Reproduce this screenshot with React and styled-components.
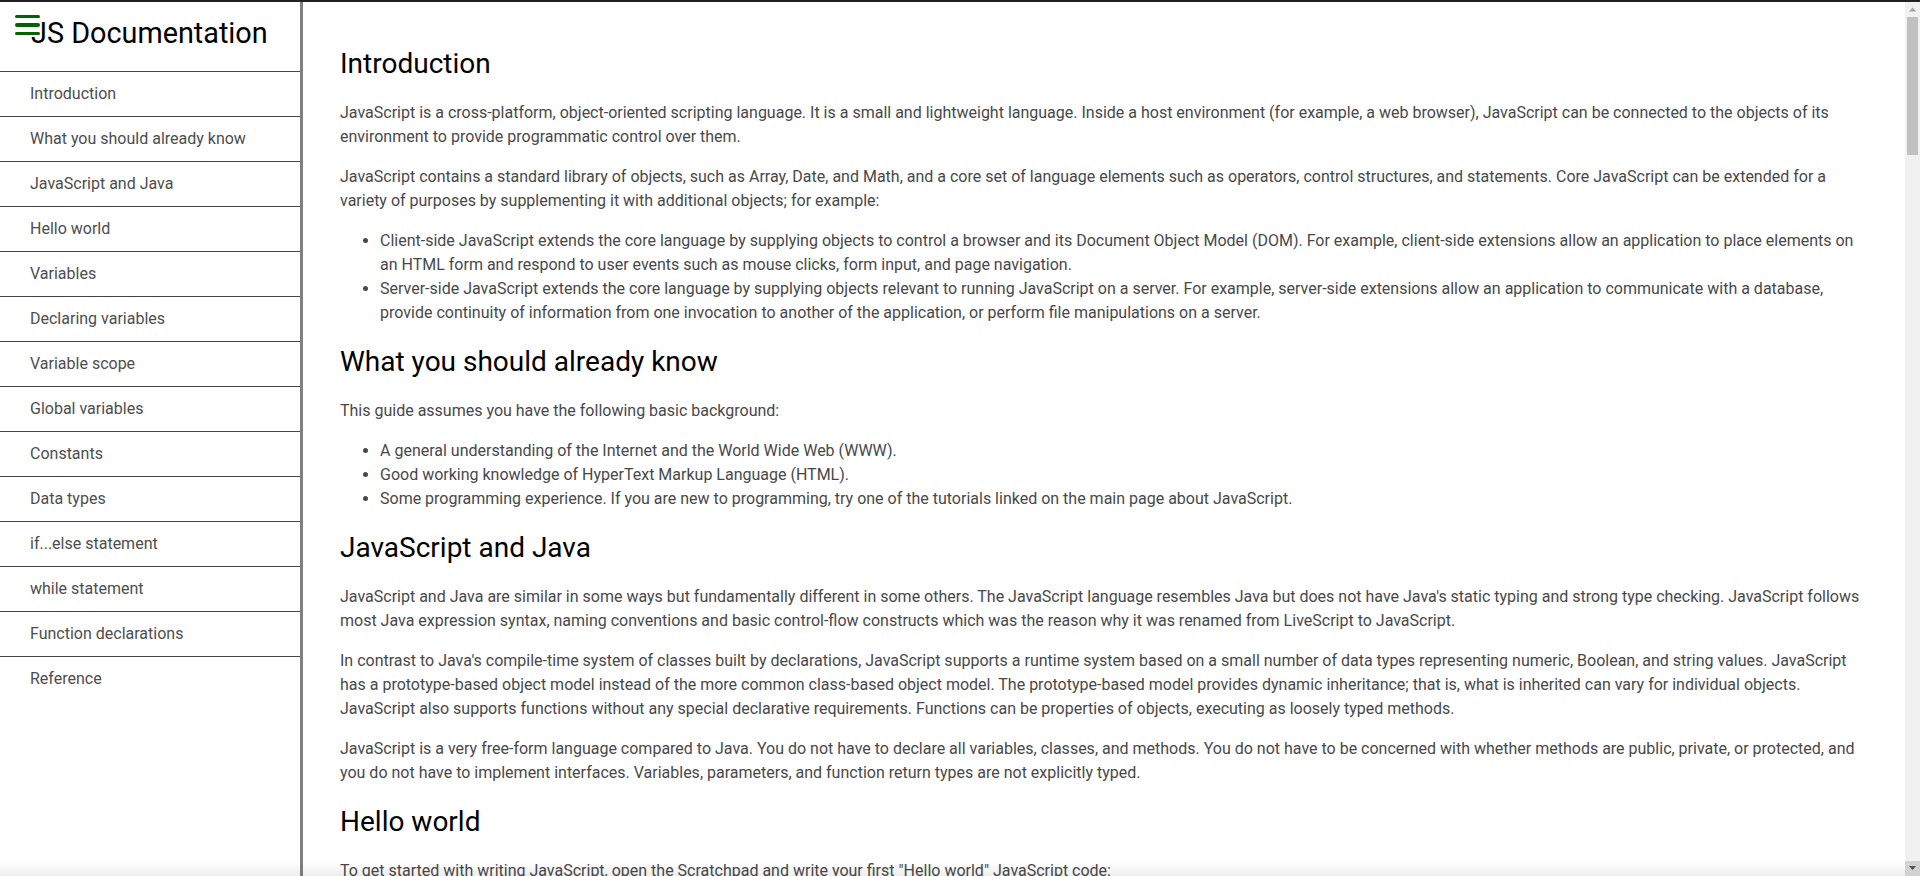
import React, { useLayoutEffect, useRef, useState } from "react";
import styled, { createGlobalStyle } from "styled-components";

const GlobalStyle = createGlobalStyle`
  html, body {
    margin: 0;
    padding: 0;
    height: 100%;
    overflow: hidden;
    background: #ffffff;
    font-family: Roboto, "Noto Sans", "Liberation Sans", sans-serif;
  }
  * { box-sizing: border-box; }
`;

const Page = styled.div`
  height: 100vh;
  display: flex;
  flex-direction: column;
  border-top: 2px solid #202124;
`;

const Body = styled.div`
  flex: 1;
  min-height: 0;
  display: flex;
  position: relative;
`;

const Sidebar = styled.nav`
  position: relative;
  flex: 0 0 303px;
  border-right: 3px solid #808080;
  background: #fff;
`;

const NavHeader = styled.header`
  height: 69px;
  padding: 14px 0 0 31px;
  font-size: 28.8px;
  font-weight: 400;
  color: #000;
  line-height: normal;
`;

const MenuButton = styled.button`
  position: absolute;
  top: 13px;
  left: 15px;
  width: 25px;
  height: 20px;
  padding: 0;
  border: 0;
  background: transparent;
  display: flex;
  flex-direction: column;
  justify-content: space-between;
  cursor: pointer;
`;

const MenuBar = styled.span`
  display: block;
  height: 3.3px;
  width: 25px;
  border-radius: 2px;
  background: #006400;
`;

const NavList = styled.ul`
  list-style: none;
  margin: 0;
  padding: 0;
`;

const NavItem = styled.li`
  border-top: 1px solid #444;
`;

const NavLink = styled.a`
  display: flex;
  align-items: center;
  height: 44px;
  padding-left: 30px;
  padding-bottom: 1px;
  font-size: 16px;
  color: #4d4d4d;
  text-decoration: none;
`;

const Content = styled.div`
  flex: 1;
  min-width: 0;
  display: flex;
`;

const Main = styled.main`
  flex: 1;
  min-width: 0;
  overflow-y: scroll;
  scrollbar-width: none;
  padding: 25px 37px 0 37px;
  font-size: 16px;
  line-height: 1.5;
  color: #484848;
  &::-webkit-scrollbar {
    display: none;
  }
`;

const ScrollRail = styled.div`
  flex: 0 0 15px;
  display: flex;
  flex-direction: column;
  background: #f1f1f1;
`;

const RailButton = styled.div`
  flex: 0 0 15px;
  display: flex;
  align-items: center;
  justify-content: center;
  background: ${(p) => (p.$active ? "#d2d2d2" : "#f1f1f1")};
`;

const RailTrack = styled.div`
  flex: 1;
  padding: 0 2px;
`;

const RailThumb = styled.div`
  height: 136px;
  background: #c1c1c1;
`;

const Section = styled.section``;

const SectionTitle = styled.h2`
  font-size: 28px;
  font-weight: 400;
  line-height: 1.5;
  color: #000;
  margin: 16px 0;
`;

const Para = styled.p`
  margin: 16px 0;
`;

const List = styled.ul`
  margin: 16px 0;
  padding-left: 40px;
`;

const Code = styled.pre`
  margin: 12px 0;
  padding: 6px 12px;
  background: #f2f2f2;
  border-radius: 4px;
  font-family: "Liberation Mono", "DejaVu Sans Mono", monospace;
  font-size: 13px;
  line-height: 1.3;
  color: #333;
  white-space: pre-wrap;
`;

const BottomShade = styled.div`
  position: absolute;
  left: 0;
  right: 15px;
  bottom: 0;
  height: 14px;
  pointer-events: none;
  background: linear-gradient(to bottom, rgba(0, 0, 0, 0), rgba(0, 0, 0, 0.07));
`;

const sections = [
  {
    title: "Introduction",
    blocks: [
      { p: "JavaScript is a cross-platform, object-oriented scripting language. It is a small and lightweight language. Inside a host environment (for example, a web browser), JavaScript can be connected to the objects of its environment to provide programmatic control over them." },
      { p: "JavaScript contains a standard library of objects, such as Array, Date, and Math, and a core set of language elements such as operators, control structures, and statements. Core JavaScript can be extended for a variety of purposes by supplementing it with additional objects; for example:" },
      {
        ul: [
          "Client-side JavaScript extends the core language by supplying objects to control a browser and its Document Object Model (DOM). For example, client-side extensions allow an application to place elements on an HTML form and respond to user events such as mouse clicks, form input, and page navigation.",
          "Server-side JavaScript extends the core language by supplying objects relevant to running JavaScript on a server. For example, server-side extensions allow an application to communicate with a database, provide continuity of information from one invocation to another of the application, or perform file manipulations on a server.",
        ],
      },
    ],
  },
  {
    title: "What you should already know",
    blocks: [
      { p: "This guide assumes you have the following basic background:" },
      {
        ul: [
          "A general understanding of the Internet and the World Wide Web (WWW).",
          "Good working knowledge of HyperText Markup Language (HTML).",
          "Some programming experience. If you are new to programming, try one of the tutorials linked on the main page about JavaScript.",
        ],
      },
    ],
  },
  {
    title: "JavaScript and Java",
    blocks: [
      { p: "JavaScript and Java are similar in some ways but fundamentally different in some others. The JavaScript language resembles Java but does not have Java's static typing and strong type checking. JavaScript follows most Java expression syntax, naming conventions and basic control-flow constructs which was the reason why it was renamed from LiveScript to JavaScript." },
      { p: "In contrast to Java's compile-time system of classes built by declarations, JavaScript supports a runtime system based on a small number of data types representing numeric, Boolean, and string values. JavaScript has a prototype-based object model instead of the more common class-based object model. The prototype-based model provides dynamic inheritance; that is, what is inherited can vary for individual objects. JavaScript also supports functions without any special declarative requirements. Functions can be properties of objects, executing as loosely typed methods." },
      { p: "JavaScript is a very free-form language compared to Java. You do not have to declare all variables, classes, and methods. You do not have to be concerned with whether methods are public, private, or protected, and you do not have to implement interfaces. Variables, parameters, and function return types are not explicitly typed." },
    ],
  },
  {
    title: "Hello world",
    blocks: [
      { p: 'To get started with writing JavaScript, open the Scratchpad and write your first "Hello world" JavaScript code:' },
      { code: 'function greetMe(yourName) { alert("Hello " + yourName); }\ngreetMe("World");' },
      { p: "Select the code in the pad and hit Ctrl+R to watch it unfold in your browser!" },
    ],
  },
  {
    title: "Variables",
    blocks: [
      { p: "You use variables as symbolic names for values in your application. The names of variables, called identifiers, conform to certain rules." },
      { p: 'A JavaScript identifier must start with a letter, underscore (_), or dollar sign ($); subsequent characters can also be digits (0-9). Because JavaScript is case sensitive, letters include the characters "A" through "Z" (uppercase) and the characters "a" through "z" (lowercase).' },
      { p: "You can use ISO 8859-1 or Unicode letters such as å and ü in identifiers. You can also use the Unicode escape sequences as characters in identifiers. Some examples of legal names are Number_hits, temp99, and _name." },
    ],
  },
  {
    title: "Declaring variables",
    blocks: [
      { p: "You can declare a variable in three ways:" },
      { p: "With the keyword var. For example," },
      { code: "var x = 42." },
      { p: "This syntax can be used to declare both local and global variables." },
      { p: "By simply assigning it a value. For example," },
      { code: "x = 42." },
      { p: "This always declares a global variable. It generates a strict JavaScript warning. You shouldn't use this variant." },
      { p: "With the keyword let. For example," },
      { code: "let y = 13." },
      { p: "This syntax can be used to declare a block scope local variable. See Variable scope below." },
    ],
  },
  {
    title: "Variable scope",
    blocks: [
      { p: "When you declare a variable outside of any function, it is called a global variable, because it is available to any other code in the current document. When you declare a variable within a function, it is called a local variable, because it is available only within that function." },
      { p: "JavaScript before ECMAScript 2015 does not have block statement scope; rather, a variable declared within a block is local to the function (or global scope) that the block resides within. For example the following code will log 5, because the scope of x is the function (or global context) within which x is declared, not the block, which in this case is an if statement." },
      { code: "if (true) {\n  var x = 5;\n}\nconsole.log(x); // 5" },
      { p: "This behavior changes, when using the let declaration introduced in ECMAScript 2015." },
      { code: "if (true) {\n  let y = 5;\n}\nconsole.log(y); // ReferenceError: y is not defined" },
    ],
  },
  {
    title: "Global variables",
    blocks: [
      { p: "Global variables are in fact properties of the global object. In web pages the global object is window, so you can set and access global variables using the window.variable syntax." },
      { p: "Consequently, you can access global variables declared in one window or frame from another window or frame by specifying the window or frame name. For example, if a variable called phoneNumber is declared in a document, you can refer to this variable from an iframe as parent.phoneNumber." },
    ],
  },
  {
    title: "Constants",
    blocks: [
      { p: "You can create a read-only, named constant with the const keyword. The syntax of a constant identifier is the same as for a variable identifier: it must start with a letter, underscore or dollar sign and can contain alphabetic, numeric, or underscore characters." },
      { code: "const PI = 3.14;" },
      { p: "A constant cannot change value through assignment or be re-declared while the script is running. It has to be initialized to a value." },
      { p: "The scope rules for constants are the same as those for let block scope variables. If the const keyword is omitted, the identifier is assumed to represent a variable." },
      { p: "You cannot declare a constant with the same name as a function or variable in the same scope. For example:" },
      { code: "// THIS WILL CAUSE AN ERROR\nfunction f() {};\nconst f = 5;\n\n// THIS WILL CAUSE AN ERROR ALSO\nfunction f() {\n  const g = 5;\n  var g;\n\n  //statements\n}" },
      { p: "However, object attributes are not protected, so the following statement is executed without problems." },
      { code: 'const MY_OBJECT = {"key": "value"};\nMY_OBJECT.key = "otherValue";' },
    ],
  },
  {
    title: "Data types",
    blocks: [
      { p: "The latest ECMAScript standard defines seven data types:" },
      {
        ul: [
          "Six data types that are primitives:",
          "Boolean. true and false.",
          "null. A special keyword denoting a null value. Because JavaScript is case-sensitive, null is not the same as Null, NULL, or any other variant.",
          "undefined. A top-level property whose value is undefined.",
          "Number. 42 or 3.14159.",
          'String. "Howdy"',
          "Symbol (new in ECMAScript 2015). A data type whose instances are unique and immutable.",
          "and Object",
        ],
      },
      { p: "Although these data types are a relatively small amount, they enable you to perform useful functions with your applications. Objects and functions are the other fundamental elements in the language. You can think of objects as named containers for values, and functions as procedures that your application can perform." },
    ],
  },
  {
    title: "if...else statement",
    blocks: [
      { p: "Use the if statement to execute a statement if a logical condition is true. Use the optional else clause to execute a statement if the condition is false. An if statement looks as follows:" },
      { code: "if (condition) {\n  statement_1;\n} else {\n  statement_2;\n}" },
      { p: "condition can be any expression that evaluates to true or false. See Boolean for an explanation of what evaluates to true and false. If condition evaluates to true, statement_1 is executed; otherwise, statement_2 is executed. statement_1 and statement_2 can be any statement, including further nested if statements." },
      { p: "You may also compound the statements using else if to have multiple conditions tested in sequence, as follows:" },
      { code: "if (condition_1) {\n  statement_1;\n} else if (condition_2) {\n  statement_2;\n} else if (condition_n) {\n  statement_n;\n} else {\n  statement_last;\n}" },
      { p: "In the case of multiple conditions only the first logical condition which evaluates to true will be executed. To execute multiple statements, group them within a block statement ({ ... }) . In general, it's good practice to always use block statements, especially when nesting if statements:" },
      { code: "if (condition) {\n  statement_1_runs_if_condition_is_true;\n  statement_2_runs_if_condition_is_true;\n} else {\n  statement_3_runs_if_condition_is_false;\n  statement_4_runs_if_condition_is_false;\n}" },
      { p: "It is advisable to not use simple assignments in a conditional expression, because the assignment can be confused with equality when glancing over the code. For example, do not use the following code:" },
      { code: "if (x = y) {\n  /* statements here */\n}" },
      { p: "If you need to use an assignment in a conditional expression, a common practice is to put additional parentheses around the assignment. For example:" },
      { code: "if ((x = y)) {\n  /* statements here */\n}" },
    ],
  },
  {
    title: "while statement",
    blocks: [
      { p: "A while statement executes its statements as long as a specified condition evaluates to true. A while statement looks as follows:" },
      { code: "while (condition)\n  statement" },
      { p: "If the condition becomes false, statement within the loop stops executing and control passes to the statement following the loop." },
      { p: "The condition test occurs before statement in the loop is executed. If the condition returns true, statement is executed and the condition is tested again. If the condition returns false, execution stops and control is passed to the statement following while." },
      { p: "To execute multiple statements, use a block statement ({ ... }) to group those statements." },
      { p: "The following while loop iterates as long as n is less than three:" },
      { code: "var n = 0;\nvar x = 0;\nwhile (n < 3) {\n  n++;\n  x += n;\n}" },
      { p: "With each iteration, the loop increments n and adds that value to x. Therefore, x and n take on the following values:" },
      {
        ul: [
          "After the first pass: n = 1 and x = 1",
          "After the second pass: n = 2 and x = 3",
          "After the third pass: n = 3 and x = 6",
        ],
      },
      { p: "After completing the third pass, the condition n < 3 is no longer true, so the loop terminates." },
    ],
  },
  {
    title: "Function declarations",
    blocks: [
      { p: "A function definition (also called a function declaration, or function statement) consists of the function keyword, followed by:" },
      {
        ul: [
          "The name of the function.",
          "A list of arguments to the function, enclosed in parentheses and separated by commas.",
          "The JavaScript statements that define the function, enclosed in curly brackets, { }.",
        ],
      },
      { p: "For example, the following code defines a simple function named square:" },
      { code: "function square(number) {\n  return number * number;\n}" },
      { p: "The function square takes one argument, called number. The function consists of one statement that says to return the argument of the function (that is, number) multiplied by itself. The return statement specifies the value returned by the function." },
      { p: "Primitive parameters (such as a number) are passed to functions by value; the value is passed to the function, but if the function changes the value of the parameter, this change is not reflected globally or in the calling function." },
    ],
  },
  {
    title: "Reference",
    blocks: [{ ul: ["All the documentation in this page is taken from MDN"] }],
  },
];

const slug = (t) => t.replace(/[^A-Za-z]+/g, "_");

function Block({ block }) {
  if (block.p) return <Para>{block.p}</Para>;
  if (block.code) return <Code>{block.code}</Code>;
  return (
    <List>
      {block.ul.map((item) => (
        <li key={item}>{item}</li>
      ))}
    </List>
  );
}

function Arrow({ down, color }) {
  return (
    <svg width="15" height="15" viewBox="0 0 15 15">
      <polygon
        points={down ? "4,5 11,5 7.5,9" : "4,9.5 11,9.5 7.5,5.5"}
        fill={color}
      />
    </svg>
  );
}

export default function App() {
  const mainRef = useRef(null);
  const [thumb, setThumb] = useState({ top: 0, height: 136 });

  useLayoutEffect(() => {
    const el = mainRef.current;
    if (!el) return;
    const update = () => {
      const track = el.clientHeight - 30;
      const ratio = el.clientHeight / el.scrollHeight;
      setThumb({
        height: Math.max(20, Math.round(track * ratio)),
        top: Math.round(track * (el.scrollTop / el.scrollHeight)),
      });
    };
    update();
    el.addEventListener("scroll", update);
    return () => el.removeEventListener("scroll", update);
  }, []);

  return (
    <>
      <GlobalStyle />
      <Page>
        <Body>
          <Sidebar id="navbar">
            <MenuButton aria-label="menu">
              <MenuBar />
              <MenuBar />
              <MenuBar />
            </MenuButton>
            <NavHeader>JS Documentation</NavHeader>
            <NavList>
              {sections.map((s) => (
                <NavItem key={s.title}>
                  <NavLink href={`#${slug(s.title)}`}>{s.title}</NavLink>
                </NavItem>
              ))}
            </NavList>
          </Sidebar>
          <Content>
            <Main id="main-doc" ref={mainRef}>
              {sections.map((s) => (
                <Section key={s.title} id={slug(s.title)}>
                  <SectionTitle>{s.title}</SectionTitle>
                  {s.blocks.map((b, i) => (
                    <Block key={i} block={b} />
                  ))}
                </Section>
              ))}
            </Main>
            <ScrollRail aria-hidden="true">
              <RailButton>
                <Arrow color="#a3a3a3" />
              </RailButton>
              <RailTrack>
                <RailThumb style={{ height: thumb.height, marginTop: thumb.top }} />
              </RailTrack>
              <RailButton $active>
                <Arrow down color="#505050" />
              </RailButton>
            </ScrollRail>
          </Content>
          <BottomShade />
        </Body>
      </Page>
    </>
  );
}
